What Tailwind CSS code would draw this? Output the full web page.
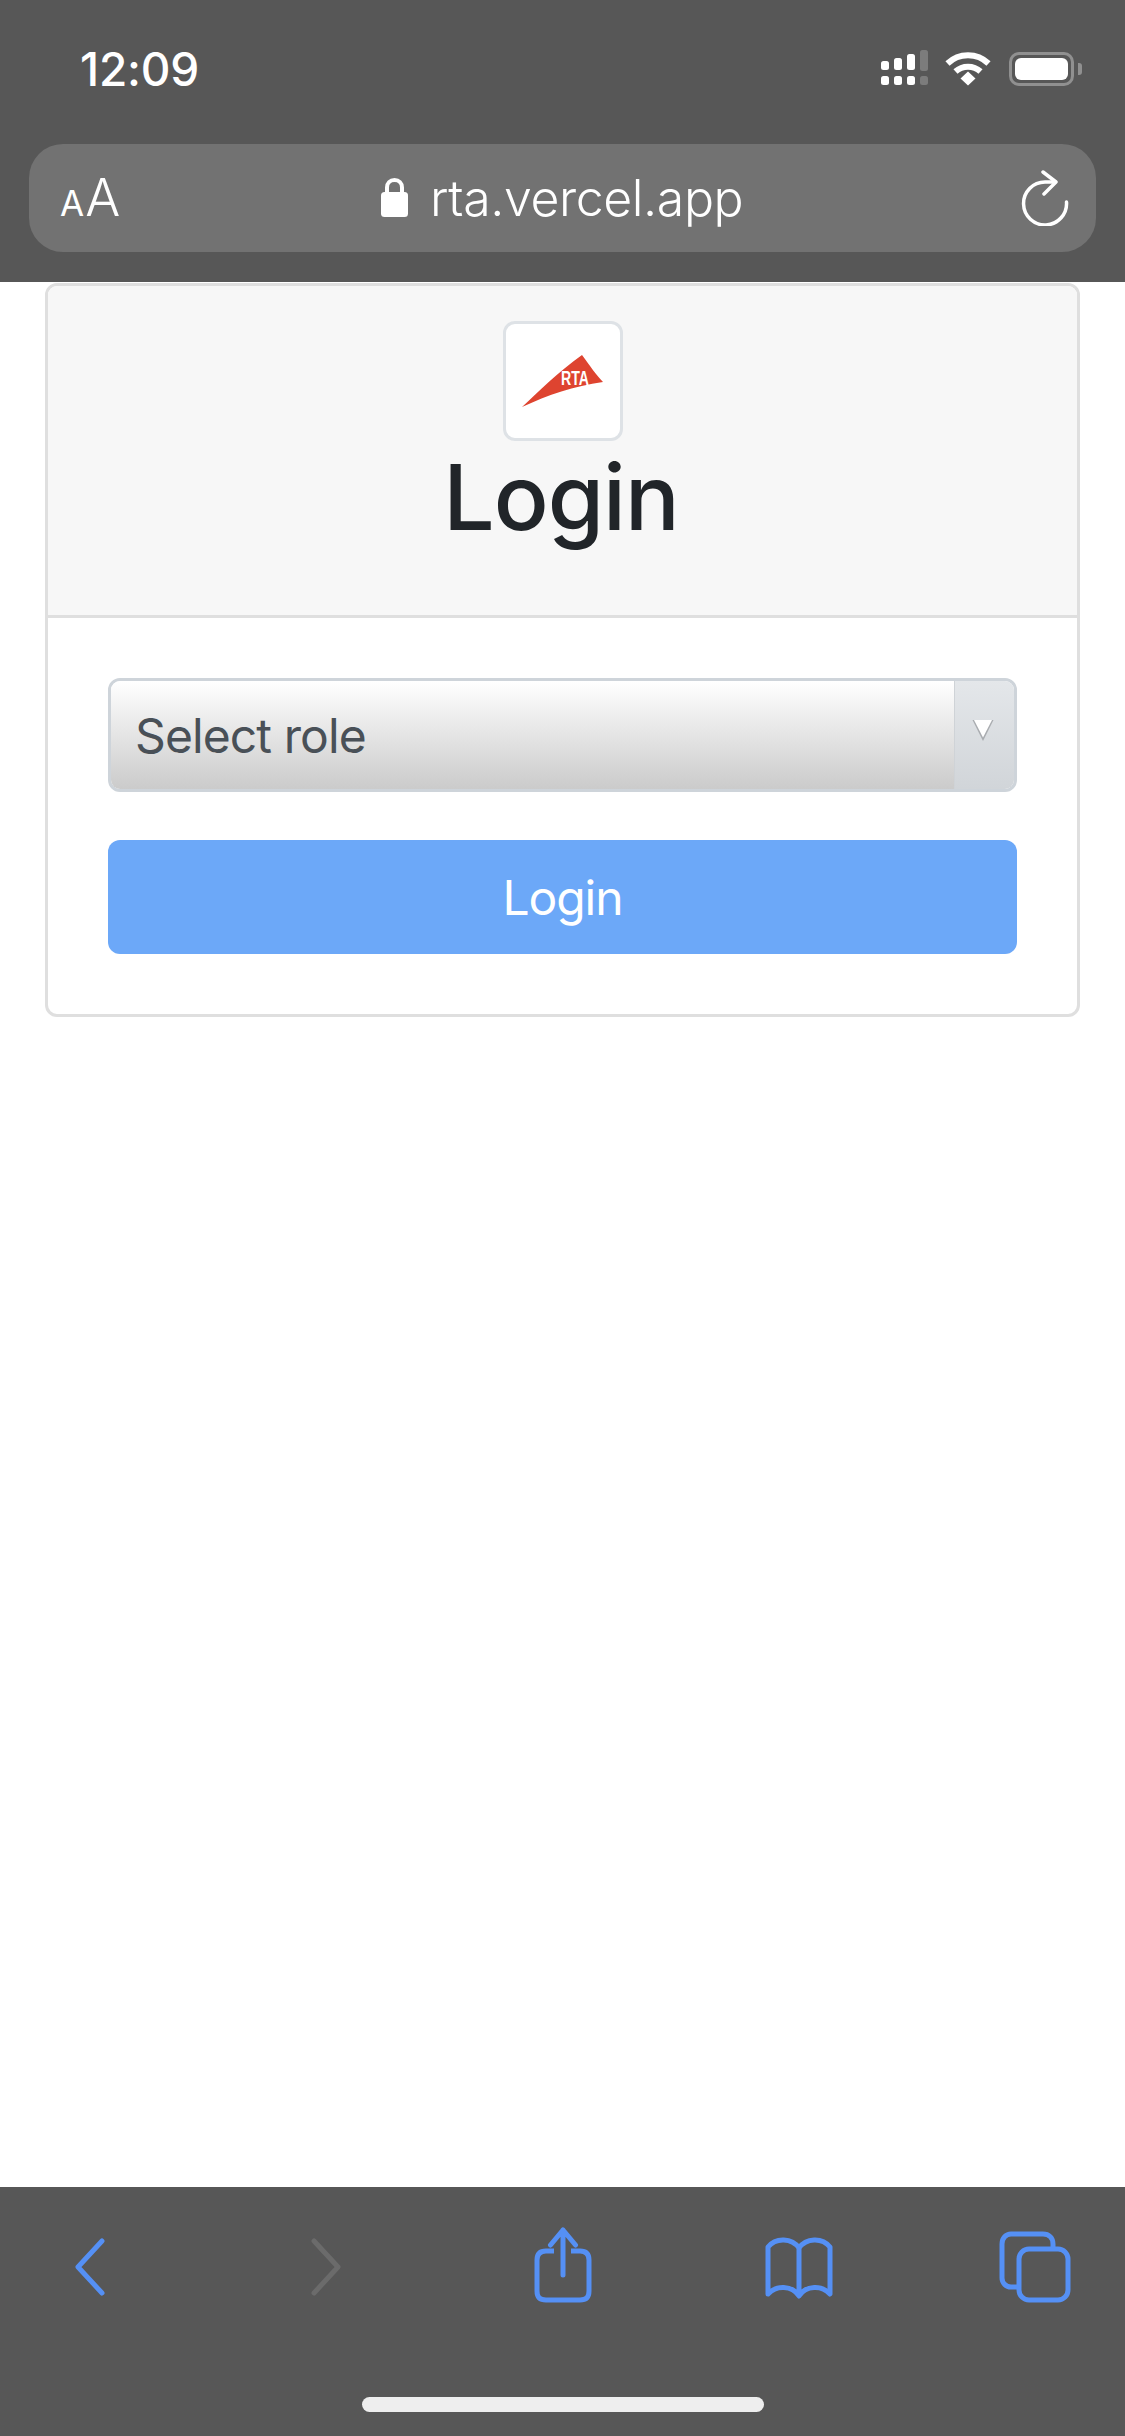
<!DOCTYPE html>
<html lang="en">
<head>
  <meta charset="UTF-8" />
  <meta name="viewport" content="width=device-width, initial-scale=1.0" />
  <title>Login</title>
  <script src="https://cdn.jsdelivr.net/npm/@tailwindcss/browser@4"></script>
</head>
<body class="bg-white font-[Inter,sans-serif]">
  <div class="w-[1125px] h-[2436px] flex flex-col overflow-hidden">

    <!-- Browser top bar -->
    <header class="h-[282px] bg-[#575757] text-white flex flex-col shrink-0">
      <div class="h-[144px] flex items-start justify-between pl-[80px] pr-[43px]">
        <span class="mt-[44px] text-[46px] leading-[50px] font-medium tracking-[-0.2px]">12:09</span>
        <div class="mt-[50px] flex items-start">
          <svg width="48" height="36" viewBox="0 0 48 36" fill="#fff">
            <rect x="0" y="11" width="8" height="9" rx="2.5"/>
            <rect x="13" y="8" width="8" height="12" rx="2.5"/>
            <rect x="26" y="4" width="8" height="16" rx="2.5"/>
            <rect x="39" y="0" width="8" height="21" rx="2.5" fill="#7c7c7c"/>
            <rect x="0" y="26" width="8" height="9" rx="2.5"/>
            <rect x="13" y="26" width="8" height="9" rx="2.5"/>
            <rect x="26" y="26" width="8" height="9" rx="2.5"/>
            <rect x="39" y="26" width="8" height="9" rx="2.5" fill="#7c7c7c"/>
          </svg>
          <svg class="ml-[16px] mt-[2px]" width="46" height="34" viewBox="0 0 46 34" fill="none" stroke="#fff" stroke-width="6">
            <path d="M2.500 11.500C14 0.500 32 0.500 43.500 11.500"/>
            <path d="M10.500 19.500C17.500 13 28.500 13 35.500 19.500"/>
            <path d="M15.500 26.500L23 19.500L30.500 26.500L23 33.500Z" fill="#fff" stroke="none"/>
          </svg>
          <div class="ml-[18px] mt-[2px] w-[65px] h-[34px] border-[3px] border-[#909090] rounded-[10px] p-[3px]">
            <div class="w-full h-full bg-white rounded-[6px]"></div>
          </div>
          <div class="ml-[4px] mt-[13px] w-[4px] h-[12px] bg-[#909090] rounded-r-[3px]"></div>
        </div>
      </div>
      <div class="mx-[29px] h-[108px] bg-[#727272] rounded-[34px] relative flex items-center justify-between pl-[31px] pr-[27px]">
        <div class="flex items-baseline leading-none font-normal">
          <span class="text-[35px]">A</span><span class="ml-[1px] text-[52px] font-light">A</span>
        </div>
        <div class="absolute left-[352px] top-[34px] flex items-start">
          <svg width="27" height="39" viewBox="0 0 27 39" fill="none">
            <path d="M6 16V9.500C6 5 9 2 13.500 2S21 5 21 9.500V16" stroke="#fff" stroke-width="4"/>
            <rect x="0" y="14" width="27" height="25" rx="3.500" fill="#fff"/>
          </svg>
          <span class="ml-[22px] -mt-[10px] text-[50px] leading-[60px] font-light tracking-[-0.4px] text-white">rta.vercel.app</span>
        </div>
        <svg width="48" height="56" viewBox="0 0 48 56" fill="none" stroke="#fff" stroke-width="3.500" stroke-linecap="round" stroke-linejoin="round">
          <path d="M45.500 32A21.500 21.500 0 1 1 24 12H33"/>
          <path d="M22 2L35 12L23 24"/>
        </svg>
      </div>
    </header>

    <!-- Page -->
    <main class="flex-1 bg-white">
      <div class="ml-[45px] w-[1035px] mt-[1px] border-[3px] border-[#dfdfdf] rounded-[12px] overflow-hidden">
        <div class="bg-[#f7f7f7] border-b-[3px] border-[#dfdfdf] h-[332px] pt-[35px] flex flex-col items-center">
          <div class="w-[120px] h-[120px] shrink-0 bg-white border-[3px] border-[#dee2e6] rounded-[12px]">
            <svg width="114" height="114" viewBox="0 0 114 114">
              <path d="M16 83C32 68 52 48 76 31C84 42 91 52 97 58C68 62 42 71 16 83Z" fill="#de4430"/>
              <text x="55" y="61" font-family="Liberation Sans, sans-serif" font-weight="700" font-size="20" fill="#fff" textLength="28" lengthAdjust="spacingAndGlyphs">RTA</text>
            </svg>
          </div>
          <h1 class="-mt-[1px] pr-[3px] text-[91px] leading-[114px] font-medium text-[#212529] tracking-[-1px]">Login</h1>
        </div>
        <div class="px-[60px] pt-[60px] pb-[60px]">
          <div class="h-[114px] border-[3px] border-[#ced4da] rounded-[12px] overflow-hidden flex">
            <div class="flex-1 bg-linear-to-b from-[#ffffff] to-[#cbcbcb] flex items-center pl-[24px] pt-[2px] text-[48px] text-[#495057] tracking-[-0.9px]">Select role</div>
            <div class="w-[60px] border-l-[1px] border-[#cfd3d7] bg-linear-to-b from-[#e4e7ea] to-[#d1d5d9] flex justify-center pt-[39px] pr-[4px]">
              <svg width="22" height="21" viewBox="0 0 22 21">
                <path d="M0.500 0H21.500L11 21Z" fill="#a9acb0"/>
                <path d="M2 0H20L11 17.500Z" fill="#fff"/>
              </svg>
            </div>
          </div>
          <button class="mt-[48px] w-full h-[114px] rounded-[12px] bg-[#6ca8f8] text-white text-[48px] pt-[2px] tracking-[-1.1px]">Login</button>
        </div>
      </div>
    </main>

    <!-- Browser bottom toolbar -->
    <footer class="h-[249px] bg-[#575757] shrink-0 flex flex-col items-center">
      <div class="w-full flex justify-between pl-[50px] pr-[51px] pt-[40px]">
        <svg width="80" height="80" viewBox="0 0 80 80" fill="none" stroke="#5590f5" stroke-width="5" stroke-linecap="round" stroke-linejoin="round">
          <path d="M52 14L28 40L52 66"/>
        </svg>
        <svg width="80" height="80" viewBox="0 0 80 80" fill="none" stroke="#6b6b6b" stroke-width="5" stroke-linecap="round" stroke-linejoin="round">
          <path d="M28 14L52 40L28 66"/>
        </svg>
        <svg width="80" height="80" viewBox="0 0 80 80" fill="none" stroke="#5590f5" stroke-width="5" stroke-linecap="round" stroke-linejoin="round">
          <path d="M32 24H24C17.500 24 15 27.500 15 33V64C15 70 17.500 73 24 73H58C64.500 73 67 70 67 64V33C67 27.500 64.500 24 58 24H49" stroke-linecap="butt"/>
          <path d="M41 48V3M28.500 18L41 3L53.500 18"/>
        </svg>
        <svg width="80" height="80" viewBox="0 0 80 80" fill="none" stroke="#5590f5" stroke-width="5" stroke-linecap="round" stroke-linejoin="round">
          <path d="M41 21V68M41 21C34 11 18 10 10 20V67C18 58 34 58 41 69C48 58 64 58 72 67V20C64 10 48 11 41 21Z"/>
        </svg>
        <svg width="80" height="80" viewBox="0 0 80 80" fill="none" stroke="#5590f5" stroke-width="5" stroke-linecap="round" stroke-linejoin="round">
          <path d="M24 60H17C12 60 8 56 8 51V17C8 11 12 7 17 7H49C55 7 59 11 59 17V21"/>
          <rect x="25" y="22" width="49" height="51" rx="10"/>
        </svg>
      </div>
      <div class="mt-[90px] w-[402px] h-[15px] bg-[#eeeeee] rounded-full"></div>
    </footer>
  </div>
</body>
</html>
